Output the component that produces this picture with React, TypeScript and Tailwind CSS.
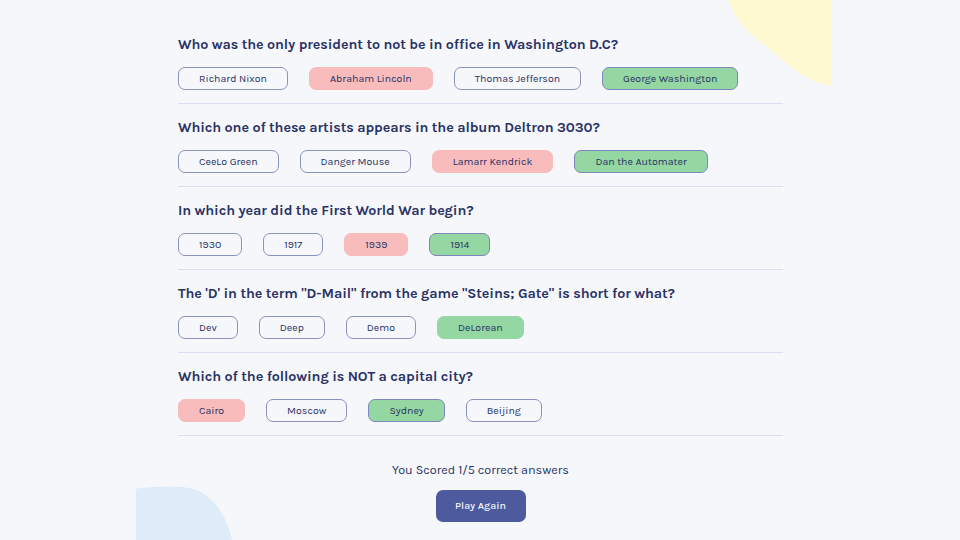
import React from "react";

type State = "none" | "wrong" | "correct" | "correctPlain";

const questions: { q: string; a: [string, State][] }[] = [
  {
    q: "Who was the only president to not be in office in Washington D.C?",
    a: [
      ["Richard Nixon", "none"],
      ["Abraham Lincoln", "wrong"],
      ["Thomas Jefferson", "none"],
      ["George Washington", "correct"],
    ],
  },
  {
    q: "Which one of these artists appears in the album Deltron 3030?",
    a: [
      ["CeeLo Green", "none"],
      ["Danger Mouse", "none"],
      ["Lamarr Kendrick", "wrong"],
      ["Dan the Automater", "correct"],
    ],
  },
  {
    q: "In which year did the First World War begin?",
    a: [
      ["1930", "none"],
      ["1917", "none"],
      ["1939", "wrong"],
      ["1914", "correct"],
    ],
  },
  {
    q: "The 'D' in the term \"D-Mail\" from the game \"Steins; Gate\" is short for what?",
    a: [
      ["Dev", "none"],
      ["Deep", "none"],
      ["Demo", "none"],
      ["DeLorean", "correctPlain"],
    ],
  },
  {
    q: "Which of the following is NOT a capital city?",
    a: [
      ["Cairo", "wrong"],
      ["Moscow", "none"],
      ["Sydney", "correct"],
      ["Beijing", "none"],
    ],
  },
];

function Option({ label, state }: { label: string; state: State }) {
  const cls =
    state === "wrong"
      ? "bg-[#f8bcbc] border-[#f8bcbc]"
      : state === "correct"
      ? "bg-[#94d7a2] border-[#7d86bd]"
      : state === "correctPlain"
      ? "bg-[#94d7a2] border-[#94d7a2]"
      : "bg-transparent border-[#8a92c4]";
  return (
    <div
      className={`h-[23px] px-[20px] flex items-center justify-center rounded-[7px] border text-[10.6px] text-[#293264] ${cls}`}
    >
      {label}
    </div>
  );
}

export default function App() {
  return (
    <div
      className="w-[960px] h-[540px] bg-[#f5f7fb] overflow-hidden"
      style={{ fontFamily: "Karla, Inter, 'Noto Sans', sans-serif" }}
    >
      <div className="relative ml-[136px] w-[695px] h-[540px] overflow-hidden">
        <svg
          className="absolute left-0 top-0"
          width="695"
          height="540"
          viewBox="0 0 695 540"
        >
          <path
            d="M592 0 C600 20 610 32 635 50 C660 72 675 84 700 86 L700 0 Z"
            fill="#fffad1"
          />
          <path
            d="M-10 490 C20 486 45 485 60 490 C80 498 92 520 96 540 L-10 540 Z"
            fill="#deebf8"
          />
        </svg>
        <div className="relative pt-[36px] pl-[42px] w-[647px]">
          {questions.map((item, i) => (
            <div key={i} className="border-b border-[#dbdef0] pb-[13px] mb-[15px]">
              <div className="h-[18px] leading-[18px] text-[14.3px] font-bold text-[#293264] tracking-[-0.1px]">
                {item.q}
              </div>
              <div className="mt-[13px] flex gap-[21px]">
                {item.a.map(([label, st]) => (
                  <Option key={label} label={label} state={st} />
                ))}
              </div>
            </div>
          ))}
          <div className="mt-[26px] flex flex-col items-center">
            <div className="text-[12.6px] text-[#293264] leading-[16px]">
              You Scored 1/5 correct answers
            </div>
            <button className="mt-[12px] w-[90px] h-[32px] rounded-[7px] bg-[#4d5b9e] text-[#f5f7fb] text-[10.6px] font-medium">
              Play Again
            </button>
          </div>
        </div>
      </div>
    </div>
  );
}
